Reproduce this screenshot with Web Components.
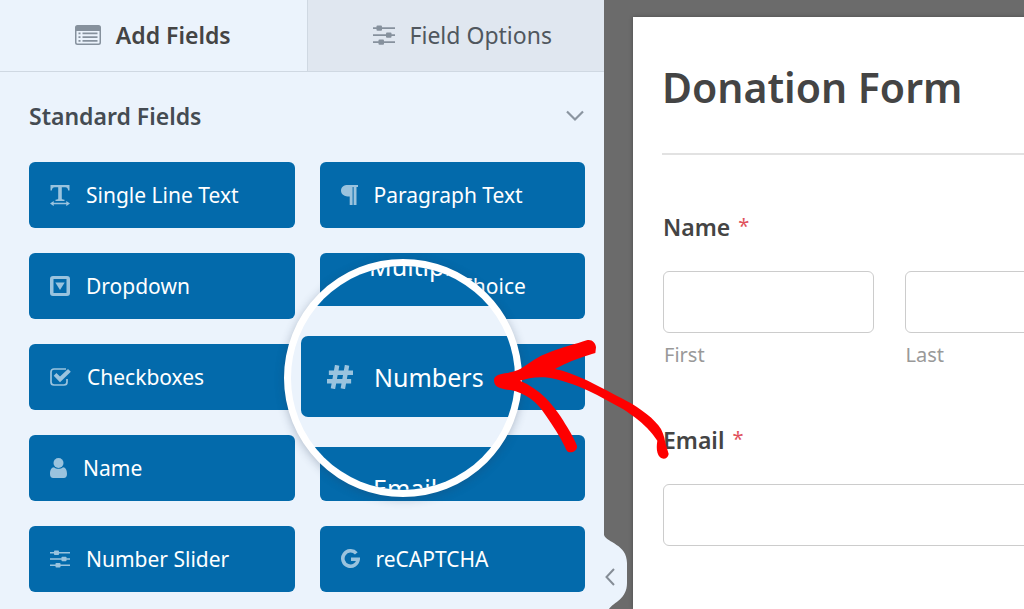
<!DOCTYPE html>
<html lang="en">
<head>
<meta charset="utf-8">
<title>Form Builder</title>
<style>
body { margin: 0; font-family: "Noto Sans", "Open Sans", sans-serif; color: #444; background: #6b6b6b; }
</style>
</head>
<body>
<form-builder></form-builder>
<script>
const ICONS = {
  list: [26, 20, '<path fill-rule="evenodd" d="M2.5 0h21A2.5 2.5 0 0 1 26 2.500v15a2.500 2.500 0 0 1-2.500 2.500h-21A2.500 2.500 0 0 1 0 17.500v-15A2.500 2.500 0 0 1 2.500 0zM1.500 6v11.500a1 1 0 0 0 1 1h21a1 1 0 0 0 1-1V6z"/><path d="M3.500 7.500h2v1.800h-2zM7.500 7.500h15v1.800h-15zM3.500 11.200h2V13h-2zM7.500 11.200h15V13h-15zM3.500 14.900h2v1.800h-2zM7.500 14.900h15v1.800h-15z"/>'],
  sliders: [22, 20, '<path d="M0 2.300h22v1.800H0zM0 9.300h22v1.800H0zM0 16.300h22v1.800H0z"/><rect x="3.500" y=".5" width="5.500" height="5.200" rx="1"/><rect x="13" y="7.500" width="5.500" height="5.200" rx="1"/><rect x="5.500" y="14.500" width="5.500" height="5.200" rx="1"/>'],
  sliderSm: [20, 18, '<path d="M0 2h20v1.600H0zM0 8.200h20v1.600H0zM0 14.400h20V16H0z"/><rect x="4" y=".4" width="5" height="4.600" rx=".8"/><rect x="11.500" y="6.700" width="5" height="4.600" rx=".8"/><rect x="5.500" y="12.900" width="5" height="4.600" rx=".8"/>'],
  text: [20, 21, '<path d="M.5 0h19v5.500h-1.300c-.5-2.300-1-3.300-3-3.300h-3.400v11c0 1 .4 1.300 2.700 1.500v1.300h-9v-1.300c2.300-.2 2.700-.5 2.700-1.500v-11H4.800c-2 0-2.500 1-3 3.300H.5z"/><path d="M0 18.500 3.700 15.900v1.900h12.600v-1.900L20 18.500l-3.700 2.600v-1.900H3.700v1.900z"/>'],
  dropdown: [20, 20, '<path fill-rule="evenodd" d="M3 0h14a3 3 0 0 1 3 3v14a3 3 0 0 1-3 3H3a3 3 0 0 1-3-3V3a3 3 0 0 1 3-3zM3.500 3v14h13V3z"/><path d="M5.300 6.500h9.400L10 14z"/>'],
  check: [21, 18, '<path fill="none" stroke="currentColor" stroke-width="1.700" d="M16 1H4A3 3 0 0 0 1 4v10a3 3 0 0 0 3 3h10a3 3 0 0 0 3-3v-3"/><path d="M3.700 7.800 6.400 5l3.600 3.600L18 1l2.800 2.700L10 14.300z"/>'],
  user: [17, 20, '<circle cx="8.500" cy="5" r="5"/><path d="M4 9.200C1.300 9.300 0 12 0 16c0 2.500 1.200 4 3.200 4h10.600c2 0 3.200-1.500 3.200-4 0-4-1.300-6.700-4-6.800-2.400 2.200-6.600 2.200-9 0z"/>'],
  para: [17, 20, '<path d="M17 0v2h-1.500v18h-2.900V2h-1v18H8.700v-8.500C3.500 11.500 0 9.400 0 5.700 0 2 2.800 0 7 0z"/>'],
  hash: [21, 19, '<path fill="none" stroke="currentColor" stroke-width="3.600" d="M8.200 0 4.800 19M16.200 0l-3.400 19M1.500 6H21M0 13h19.500"/>'],
  dot: [17, 20, '<circle cx="8.500" cy="10" r="7.300" fill="none" stroke="currentColor" stroke-width="2.400"/><circle cx="8.500" cy="10" r="3.500"/>'],
  mail: [20, 16, '<path d="M0 2a2 2 0 0 1 2-2h16a2 2 0 0 1 2 2l-10 7zM0 4.500l10 7 10-7V14a2 2 0 0 1-2 2H2a2 2 0 0 1-2-2z"/>'],
  google: [19, 20, '<path fill="none" stroke="currentColor" stroke-width="3.600" d="M15.300 4.400A7.700 7.700 0 1 0 17.200 10.200H10"/>']
};
const glyph = (name, scale = 1) => {
  const [w, h, body] = ICONS[name];
  return `<svg aria-hidden="true" viewBox="0 0 ${w} ${h}" width="${Math.round(w * scale)}" height="${Math.round(h * scale)}" fill="currentColor">${body}</svg>`;
};
const define = (name, render) => customElements.define(name, class extends HTMLElement {
  constructor() { super(); this.attachShadow({ mode: 'open' }); }
  connectedCallback() { this.shadowRoot.innerHTML = render(this); }
});

define('builder-tab', el => `<style>
  :host { display: flex; }
  button { flex: 1; display: flex; align-items: center; justify-content: center; gap: 15px; height: 72px; padding: 0 0 2px 12px;
    border: 0; border-bottom: 1px solid #cfd8e2; background: #e0e7f0; font-family: inherit; font-size: 23px; line-height: 32px; color: #50575e; }
  :host([active]) button { padding: 0 2px 2px 0; background: #ebf3fc; border-right: 1px solid #cfd8e2; font-weight: 600; color: #444; }
  svg { color: #86919d; }
</style><button role="tab" aria-selected="${el.hasAttribute('active')}">${glyph(el.getAttribute('icon'))}<span><slot></slot></span></button>`);

define('field-button', el => `<style>
  :host { display: block; }
  button { display: flex; align-items: center; gap: 16px; width: 100%; height: 66px; padding: 0 21px; border: 0; border-radius: 6px;
    background: #036aab; color: #fff; font-family: inherit; font-size: 21px; line-height: 30px; white-space: nowrap; }
  :host([large]) button { height: 81px; padding: 0 26px; gap: 21px; border-radius: 7px; font-size: 25px; }
  svg { color: #9ac3de; flex: none; }
</style><button ${el.hasAttribute('large') ? 'tabindex="-1"' : ''} ${el.hasAttribute('name') ? `aria-label="${el.getAttribute('name')}"` : ''}>${glyph(el.getAttribute('icon'), el.hasAttribute('large') ? 1.24 : 1)}<span><slot></slot></span></button>`);

define('magnifier-lens', () => `<style>
  :host { display: flex; flex-direction: column; gap: 30px; box-sizing: border-box; width: 238px; height: 238px; overflow: hidden;
    border: 7px solid #fff; border-radius: 50%; background: #ebf3fc; box-shadow: 0 2px 10px rgba(40, 60, 90, .3); }
  ::slotted(*) { flex: none; width: 327px; margin-left: 10px; }
  ::slotted(:first-child) { margin-top: -41px; }
</style><slot></slot>`);

define('field-group', () => `<style>
  :host { display: block; position: relative; padding: 24px 19px 16px 29px; }
  header { display: flex; align-items: center; justify-content: space-between; margin-bottom: 26px; }
  h2 { margin: 0; font-size: 23px; line-height: 40px; font-weight: 600; color: #444b52; }
  header button { display: flex; padding: 0; border: 0; background: none; color: #8b95a0; }
  .grid { display: grid; grid-template-columns: 1fr 1fr; gap: 25px; }
  ::slotted(magnifier-lens) { position: absolute; left: 284px; top: 187px; }
</style>
<header><h2><slot name="title"></slot></h2><button aria-label="Collapse group"><svg width="20" height="12" viewBox="0 0 20 12" fill="none" stroke="currentColor" stroke-width="2.200"><path d="M2 1.500l8 8 8-8"/></svg></button></header>
<div class="grid"><slot></slot></div><slot name="overlay"></slot>`);

define('pointer-arrow', () => `<style>:host { display: block; pointer-events: none; } svg { display: block; }</style>
<svg width="210" height="160" viewBox="0 0 630 480" fill="#fe0000" aria-hidden="true"><path d="M42 182C41 168 55 164 75 160C95 157 110 152 122 146C150 128 175 108 205 98C245 82 290 72 320 61C335 57 347 68 348 82L346 99C320 106 280 120 253 133L225 147C255 153 285 165 310 176C345 192 390 216 425 235C465 255 510 285 535 316C547 330 553 350 556 368L566 402C564 416 550 420 540 412C529 402 529 380 532 362C524 353 520 344 510 334C490 310 460 288 430 268C395 248 360 229 325 212C285 195 240 177 195 172C165 170 140 176 120 182C148 194 175 212 197 234C224 261 247 296 262 322C275 344 286 363 291 378C292 390 282 397 270 397C262 397 258 390 255 381C240 348 218 316 198 287C184 266 170 249 152 236C133 223 112 214 92 210C70 207 43 205 42 182Z"/></svg>`);

define('builder-sidebar', () => `<style>
  :host { display: flex; flex-direction: column; position: relative; z-index: 1; background: #ebf3fc; }
  nav { display: grid; grid-template-columns: 309fr 296fr; }
  .toggle { position: absolute; left: 100%; bottom: 0; padding: 0; border: 0; background: none; color: #858d96; }
  .toggle svg { display: block; }
  ::slotted(pointer-arrow) { position: absolute; left: 480px; top: 320px; }
</style>
<nav role="tablist"><slot name="tab"></slot></nav><slot></slot>
<button class="toggle" aria-label="Collapse panel"><svg width="24" height="74" viewBox="0 0 24 74" fill="none"><path fill="#ebf3fc" d="M0 0C3 8 23 9 23 28v20c0 16-13 19-18 26H0z"/><path stroke="currentColor" stroke-width="2" d="M10 34L2.500 42l7.500 8"/></svg></button>
<slot name="annotation"></slot>`);

define('text-field', el => `<style>
  :host { display: flex; flex-direction: column; gap: 7px; }
  input { box-sizing: border-box; width: 100%; height: 62px; padding: 0 16px; border: 1px solid #ccc; border-radius: 6px; background: #fff; font: inherit; }
  label { padding-left: 1px; font-size: 20px; line-height: 30px; color: #999; }
</style><input id="f" type="${el.getAttribute('type') || 'text'}" aria-label="${el.getAttribute('name')}">${el.hasAttribute('sublabel') ? `<label for="f">${el.getAttribute('sublabel')}</label>` : ''}`);

define('form-row', () => `<style>
  :host { display: block; }
  fieldset { margin: 0; padding: 0; border: 0; min-width: 0; }
  legend { padding: 0; font-size: 23px; line-height: 32px; font-weight: 600; color: #444; }
  legend b { padding-left: 2px; font-size: 20px; line-height: 20px; font-weight: 400; color: #e0525c; vertical-align: 3px; }
  .inputs { display: grid; grid-auto-flow: column; grid-auto-columns: 1fr; gap: 31px; padding-top: 28px; }
</style><fieldset><legend><slot name="label"></slot> <b>*</b></legend><div class="inputs"><slot></slot></div></fieldset>`);

define('form-preview', () => `<style>
  :host { display: block; overflow: hidden; padding: 17px 0 0 29px; background: #6b6b6b; }
  /* the sheet runs on past the right edge of the pane */
  section { box-sizing: border-box; min-height: 100%; width: calc(100% + 120px); padding: 37px 29px; background: #fff; box-shadow: 0 0 4px rgba(0, 0, 0, .3); }
  h1 { margin: 0 0 56px; padding: 0 0 32px; border-bottom: 2px solid #e2e2e2; font-size: 41px; line-height: 67px; font-weight: 600; color: #444; }
  ::slotted(form-row) { margin-left: 1px; }
  ::slotted(form-row:not(:last-child)) { margin-bottom: 54px; }
</style><section><h1><slot name="title"></slot></h1><slot></slot></section>`);

define('form-builder', () => `<style>
  :host { display: grid; grid-template-columns: 604fr 420fr; min-height: 100vh; }
</style>
<builder-sidebar>
  <builder-tab slot="tab" icon="list" active>Add Fields</builder-tab>
  <builder-tab slot="tab" icon="sliders">Field Options</builder-tab>
  <field-group>
    <span slot="title">Standard Fields</span>
    <field-button icon="text">Single Line Text</field-button>
    <field-button icon="para">Paragraph Text</field-button>
    <field-button icon="dropdown">Dropdown</field-button>
    <field-button icon="dot">Multiple Choice</field-button>
    <field-button icon="check">Checkboxes</field-button>
    <field-button icon="hash" name="Numbers"></field-button>
    <field-button icon="user">Name</field-button>
    <field-button icon="mail" name="Email"></field-button>
    <field-button icon="sliderSm">Number Slider</field-button>
    <field-button icon="google">reCAPTCHA</field-button>
    <magnifier-lens slot="overlay" aria-hidden="true">
      <field-button large icon="dot">Multiple Choice</field-button>
      <field-button large icon="hash">Numbers</field-button>
      <field-button large icon="mail">Email</field-button>
    </magnifier-lens>
  </field-group>
  <pointer-arrow slot="annotation"></pointer-arrow>
</builder-sidebar>
<form-preview>
  <span slot="title">Donation Form</span>
  <form-row><span slot="label">Name</span><text-field name="First name" sublabel="First"></text-field><text-field name="Last name" sublabel="Last"></text-field></form-row>
  <form-row><span slot="label">Email</span><text-field name="Email" type="email"></text-field></form-row>
</form-preview>`);
</script>
</body>
</html>
